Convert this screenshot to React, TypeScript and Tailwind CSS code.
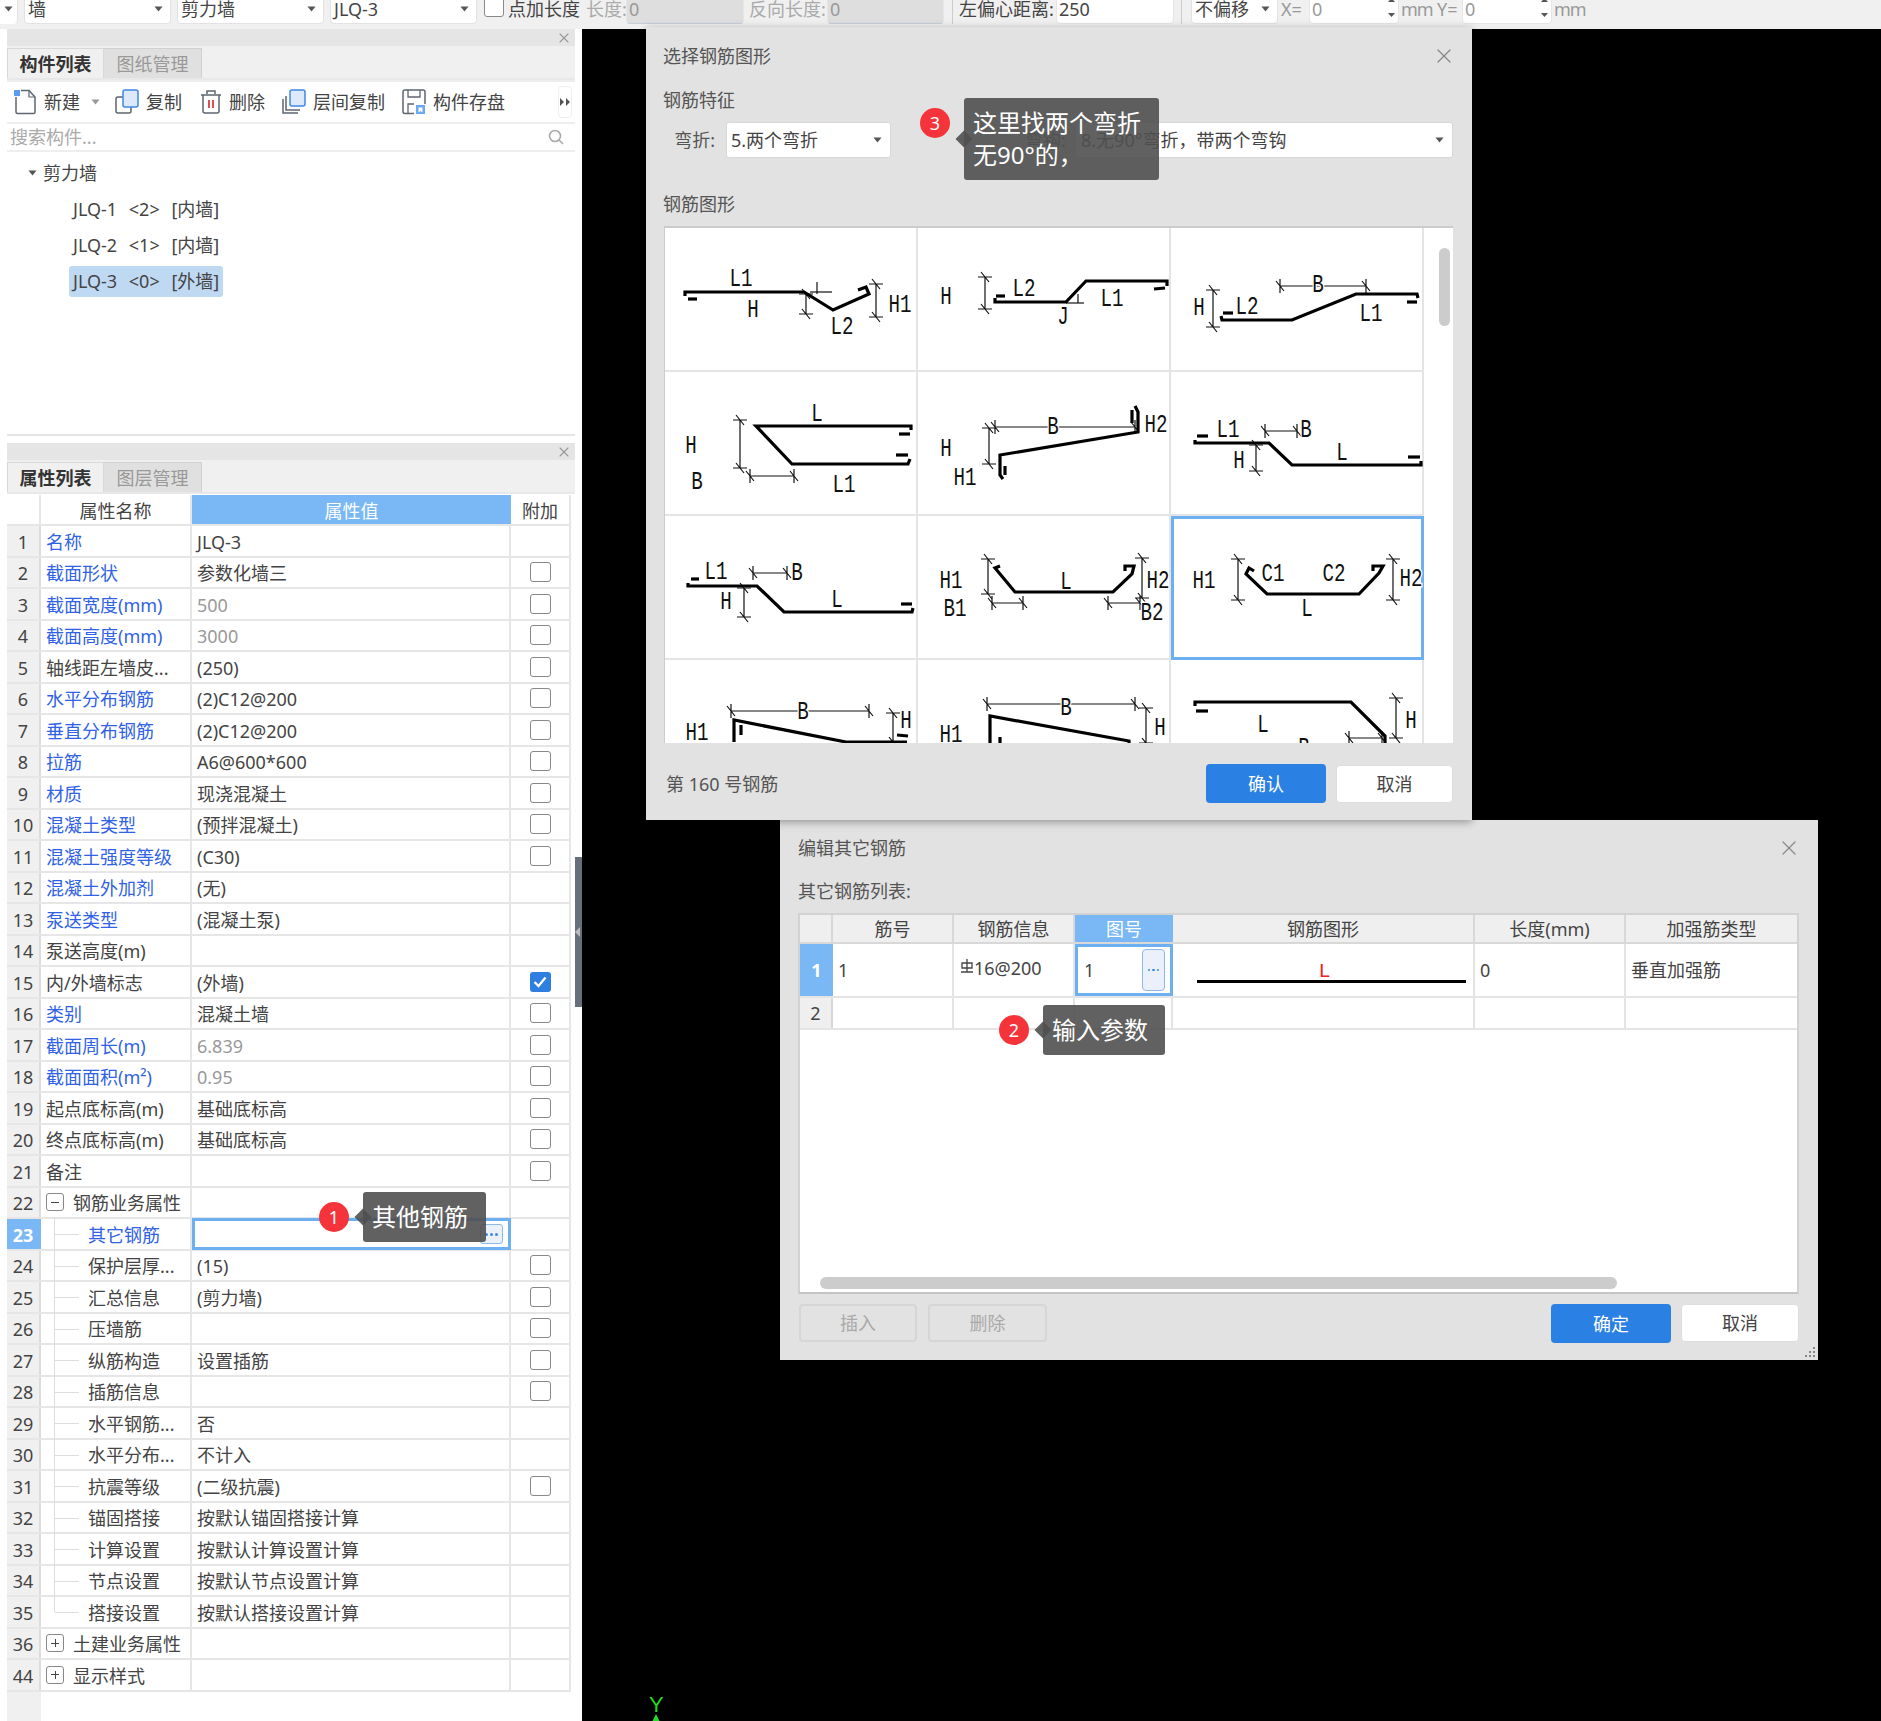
import { X } from "lucide-react";
import type { ReactNode } from "react";

type Row = {
  no: number;
  name: string;
  value?: string;
  blue?: boolean;
  muted?: boolean;
  check?: boolean;
  checked?: boolean;
  sub?: boolean;
  toggle?: "-" | "+";
  active?: boolean;
};

const ROWS: Row[] = [
  { no: 1, name: "名称", value: "JLQ-3", blue: true },
  { no: 2, name: "截面形状", value: "参数化墙三", blue: true, check: true },
  { no: 3, name: "截面宽度(mm)", value: "500", blue: true, muted: true, check: true },
  { no: 4, name: "截面高度(mm)", value: "3000", blue: true, muted: true, check: true },
  { no: 5, name: "轴线距左墙皮...", value: "(250)", check: true },
  { no: 6, name: "水平分布钢筋", value: "(2)C12@200", blue: true, check: true },
  { no: 7, name: "垂直分布钢筋", value: "(2)C12@200", blue: true, check: true },
  { no: 8, name: "拉筋", value: "A6@600*600", blue: true, check: true },
  { no: 9, name: "材质", value: "现浇混凝土", blue: true, check: true },
  { no: 10, name: "混凝土类型", value: "(预拌混凝土)", blue: true, check: true },
  { no: 11, name: "混凝土强度等级", value: "(C30)", blue: true, check: true },
  { no: 12, name: "混凝土外加剂", value: "(无)", blue: true },
  { no: 13, name: "泵送类型", value: "(混凝土泵)", blue: true },
  { no: 14, name: "泵送高度(m)" },
  { no: 15, name: "内/外墙标志", value: "(外墙)", check: true, checked: true },
  { no: 16, name: "类别", value: "混凝土墙", blue: true, check: true },
  { no: 17, name: "截面周长(m)", value: "6.839", blue: true, muted: true, check: true },
  { no: 18, name: "截面面积(m²)", value: "0.95", blue: true, muted: true, check: true },
  { no: 19, name: "起点底标高(m)", value: "基础底标高", check: true },
  { no: 20, name: "终点底标高(m)", value: "基础底标高", check: true },
  { no: 21, name: "备注", check: true },
  { no: 22, name: "钢筋业务属性", toggle: "-" },
  { no: 23, name: "其它钢筋", sub: true, blue: true, active: true },
  { no: 24, name: "保护层厚...", value: "(15)", sub: true, check: true },
  { no: 25, name: "汇总信息", value: "(剪力墙)", sub: true, check: true },
  { no: 26, name: "压墙筋", sub: true, check: true },
  { no: 27, name: "纵筋构造", value: "设置插筋", sub: true, check: true },
  { no: 28, name: "插筋信息", sub: true, check: true },
  { no: 29, name: "水平钢筋...", value: "否", sub: true },
  { no: 30, name: "水平分布...", value: "不计入", sub: true },
  { no: 31, name: "抗震等级", value: "(二级抗震)", sub: true, check: true },
  { no: 32, name: "锚固搭接", value: "按默认锚固搭接计算", sub: true },
  { no: 33, name: "计算设置", value: "按默认计算设置计算", sub: true },
  { no: 34, name: "节点设置", value: "按默认节点设置计算", sub: true },
  { no: 35, name: "搭接设置", value: "按默认搭接设置计算", sub: true },
  { no: 36, name: "土建业务属性", toggle: "+" },
  { no: 44, name: "显示样式", toggle: "+" },
];

type Shape = {
  p: string[];
  d: number[][];
  t: [string, number, number][];
  thin?: number[][];
  sel?: boolean;
};

const SHAPES: Shape[] = [
  {
    p: ["20,68 20,64 139,64 168,82 204,66 201,59 193,62", "23,71 32,71"],
    d: [[141, 66, 141, 86], [211, 56, 211, 89]],
    thin: [[145, 64, 167, 64], [152, 54, 152, 66]],
    t: [["L1", 76, 51], ["H", 88, 82], ["L2", 177, 99], ["H1", 235, 77]],
  },
  {
    p: ["77,70 77,74 148,74 168,53 249,53 249,58", "78,68 87,68", "236,61 247,60"],
    d: [[67, 49, 67, 81]],
    thin: [[148, 75, 166, 75], [160, 66, 160, 75]],
    t: [["H", 28, 69], ["L2", 106, 61], ["L1", 194, 71], ["J", 145, 89]],
  },
  {
    p: ["50,88 51,92 121,92 185,66 246,66 247,70", "52,85 62,85", "236,74 246,74"],
    d: [[109, 58, 195, 58], [42, 62, 42, 99]],
    t: [["B", 147, 57], ["H", 28, 80], ["L2", 76, 79], ["L1", 200, 86]],
  },
  {
    p: ["246,58 246,54 91,54 127,92 243,92 245,87", "234,62 245,62", "231,83 243,83"],
    d: [[75, 48, 75, 96], [85, 104, 129, 104]],
    t: [["L", 152, 42], ["H", 26, 74], ["B", 32, 110], ["L1", 179, 113]],
  },
  {
    p: ["85,107 82,103 82,83 220,60 220,40 217,34", "87,94 87,103", "214,38 214,51"],
    d: [[77, 55, 217, 55], [71, 56, 71, 92]],
    t: [["B", 135, 55], ["H2", 238, 53], ["H", 28, 77], ["H1", 47, 106]],
  },
  {
    p: ["24,68 24,71 98,71 121,93 250,93 250,89", "26,64 37,64", "237,85 249,85"],
    d: [[94, 59, 126, 59], [85, 73, 85, 99]],
    t: [["L1", 57, 58], ["B", 135, 58], ["L", 171, 81], ["H", 68, 89]],
  },
  {
    p: ["23,67 23,70 92,70 119,96 247,96 248,92", "26,63 34,63", "236,88 247,88"],
    d: [[88, 57, 122, 57], [79, 72, 79, 101]],
    t: [["L1", 51, 56], ["B", 132, 57], ["H", 61, 86], ["L", 172, 84]],
  },
  {
    p: ["82,50 77,52 97,76 195,76 214,58 216,50 207,50 207,55"],
    d: [[70, 43, 70, 78], [224, 42, 224, 82], [74, 87, 105, 87], [190, 87, 222, 87]],
    t: [["H1", 33, 65], ["B1", 37, 93], ["L", 148, 66], ["H2", 240, 65], ["B2", 234, 97]],
  },
  {
    p: ["83,55 78,52 75,58 96,78 188,78 208,57 212,50 202,50 202,55"],
    d: [[67, 43, 67, 84], [222, 43, 222, 84]],
    t: [["H1", 33, 65], ["C1", 102, 58], ["C2", 163, 58], ["L", 136, 93], ["H2", 240, 63]],
    sel: true,
  },
  {
    p: ["69,82 69,60 181,82 242,82", "76,65 76,75", "232,75 243,76"],
    d: [[66, 51, 204, 51], [228, 53, 228, 82]],
    t: [["H1", 32, 73], ["B", 138, 52], ["H", 241, 61]],
  },
  {
    p: ["72,90 72,56 211,81 211,90", "82,77 82,90"],
    d: [[69, 44, 217, 44], [228, 48, 228, 83]],
    t: [["H1", 33, 75], ["B", 148, 48], ["H", 242, 68]],
  },
  {
    p: ["24,46 24,42 180,42 214,76 214,90", "25,51 37,51"],
    d: [[225, 38, 225, 78], [178, 78, 211, 78]],
    t: [["L", 92, 65], ["H", 240, 61], ["B", 133, 88]],
  },
];

const Caret = ({ className = "" }: { className?: string }) => (
  <svg width="9" height="6" viewBox="0 0 9 6" className={className}>
    <path d="M0.5 0.5h8L4.5 5.5z" fill="#555" />
  </svg>
);

const Spin = () => (
  <svg width="7" height="24" viewBox="0 0 7 24" className="absolute right-[3px] top-[3px]">
    <path d="M3.5 0L7 4H0z M0 15h7L3.5 19z" fill="#555" />
  </svg>
);

const TopSelect = ({ className, text }: { className: string; text?: string }) => (
  <div
    className={`h-[30px] shrink-0 flex items-center justify-between bg-white border border-[#e2e2e2] rounded-[4px] pl-[3px] pr-[7px] ${className}`}
  >
    <span>{text}</span>
    <Caret />
  </div>
);

const TopInput = ({ className, text, spin }: { className: string; text: string; spin?: boolean }) => (
  <div
    className={`relative h-[30px] shrink-0 flex items-center border border-[#e6e6e6] rounded-[4px] pl-[2px] ${className}`}
  >
    {text}
    {spin && <Spin />}
  </div>
);

const TopBar = () => (
  <div className="h-[29px] shrink-0 flex items-end overflow-hidden bg-[#f0f0f0] pb-[5px] text-[#444] leading-[30px]">
    <div className="w-[18px] h-[30px] shrink-0 flex items-center justify-center bg-white border-r border-[#e2e2e2] rounded-r-[4px]">
      <Caret />
    </div>
    <TopSelect className="w-[147px] ml-[6px]" text="墙" />
    <TopSelect className="w-[147px] ml-[6px]" text="剪力墙" />
    <TopSelect className="w-[147px] ml-[6px]" text="JLQ-3" />
    <div className="w-[20px] h-[20px] shrink-0 ml-[7px] mb-[7px] bg-white border border-[#888] rounded-[3px]" />
    <span className="ml-[4px] h-[30px] w-[78px] shrink-0">点加长度</span>
    <span className="h-[30px] w-[40px] shrink-0 text-[#aaa] whitespace-nowrap">长度:</span>
    <TopInput className="w-[118px] bg-[#dedede] text-[#999] border-b-[#c5cfdc]" text="0" />
    <span className="h-[30px] ml-[5px] w-[78px] shrink-0 text-[#aaa] whitespace-nowrap">反向长度:</span>
    <TopInput className="w-[117px] bg-[#dedede] text-[#999] border-b-[#c5cfdc]" text="0" />
    <div className="w-px h-[24px] ml-[8px] shrink-0 bg-[#ccc]" />
    <span className="h-[30px] ml-[6px] w-[97px] shrink-0 whitespace-nowrap">左偏心距离:</span>
    <TopInput className="w-[118px] bg-white" text="250" />
    <div className="w-px h-[24px] ml-[7px] shrink-0 bg-[#ccc]" />
    <TopSelect className="w-[87px] ml-[9px]" text="不偏移" />
    <span className="h-[30px] ml-[3px] w-[28px] shrink-0 text-[#999]">X=</span>
    <TopInput className="w-[90px] bg-white text-[#999]" text="0" spin />
    <span className="h-[30px] ml-[2px] w-[36px] shrink-0 text-[#999] tracking-[-1px]">mm</span>
    <span className="h-[30px] w-[25px] shrink-0 text-[#999]">Y=</span>
    <TopInput className="w-[90px] bg-white text-[#999]" text="0" spin />
    <span className="h-[30px] ml-[2px] text-[#999] tracking-[-1px]">mm</span>
  </div>
);

const PanelHead = () => (
  <div className="h-[17px] shrink-0 flex items-center justify-end pr-[3px] bg-[#e5e5e5]">
    <X size={16} strokeWidth={1.600} className="text-[#999]" />
  </div>
);

const Tabs = ({ first, second }: { first: string; second: string }) => (
  <div className="h-[34px] shrink-0 flex pt-[2px] bg-[#f0f0f0] border-b-2 border-[#e8e8e8]">
    <div className="w-[97px] flex items-center justify-center bg-[#f0f0f0] border-l border-t border-r border-[#d8d8d8] font-bold text-[#333]">
      {first}
    </div>
    <div className="w-[98px] flex items-center justify-center bg-[#e0e0e0] border-t border-r border-[#d0d0d0] text-[#999]">
      {second}
    </div>
  </div>
);

const DocIcon = () => (
  <svg width="24" height="26" viewBox="0 0 24 26" fill="none">
    <path d="M3 8v15a1.5 1.5 0 0 0 1.500 1.500h16a1.500 1.500 0 0 0 1.500-1.500V8l-6-6.500H8" stroke="#5d6670" strokeWidth="1.500" />
    <path d="M16 1.500V8h6" stroke="#5d6670" strokeWidth="1.200" />
    <rect x="1" y="1" width="6" height="6" fill="#5b9cf0" />
  </svg>
);

const CopyIcon = () => (
  <svg width="24" height="26" viewBox="0 0 24 26" fill="none">
    <rect x="1" y="8" width="15" height="16" rx="2" stroke="#5d6670" strokeWidth="1.500" />
    <rect x="8" y="1" width="15" height="17" rx="2" fill="#dce9fb" stroke="#3f86e6" strokeWidth="1.500" />
  </svg>
);

const TrashIcon = () => (
  <svg width="22" height="26" viewBox="0 0 22 26" fill="none">
    <path d="M3 6v16a2 2 0 0 0 2 2h12a2 2 0 0 0 2-2V6M1 6h20M7 5V2h8v3" stroke="#5d6670" strokeWidth="1.500" />
    <path d="M9 11v8M13 11v8" stroke="#e23b3b" strokeWidth="1.800" />
  </svg>
);

const LayerCopyIcon = () => (
  <svg width="24" height="26" viewBox="0 0 24 26" fill="none">
    <path d="M1 10v14h15" stroke="#5d6670" strokeWidth="1.500" />
    <path d="M4 7v14h14" stroke="#5d6670" strokeWidth="1.500" />
    <rect x="8" y="1" width="15" height="16" rx="2" fill="#dce9fb" stroke="#3f86e6" strokeWidth="1.500" />
  </svg>
);

const SaveIcon = () => (
  <svg width="24" height="26" viewBox="0 0 24 26" fill="none">
    <path d="M12 24.500H3a2 2 0 0 1-2-2V3a2 2 0 0 1 2-2h18a2 2 0 0 1 2 2v12" stroke="#5d6670" strokeWidth="1.500" />
    <path d="M6 1v7h12V1M6 24V15h6" stroke="#5d6670" strokeWidth="1.300" />
    <path d="M14 16h9v9h-9z" fill="#6aa9f2" />
    <path d="M16.500 18.500h4v5l-2-1.500-2 1.500z" fill="#fff" />
  </svg>
);

const ToolItem = ({ icon, label, className }: { icon: ReactNode; label: string; className: string }) => (
  <div className={`flex items-center gap-[7px] ${className}`}>
    {icon}
    <span>{label}</span>
  </div>
);

const Toolbar = () => (
  <div className="relative h-[40px] mt-[2px] shrink-0 flex items-center bg-white text-[#444]">
    <ToolItem className="ml-[6px]" icon={<DocIcon />} label="新建" />
    <Caret className="ml-[11px] opacity-60" />
    <ToolItem className="ml-[15px]" icon={<CopyIcon />} label="复制" />
    <ToolItem className="ml-[18px]" icon={<TrashIcon />} label="删除" />
    <ToolItem className="ml-[17px]" icon={<LayerCopyIcon />} label="层间复制" />
    <ToolItem className="ml-[17px]" icon={<SaveIcon />} label="构件存盘" />
    <div className="ml-auto mr-[3px] w-[14px] h-[32px] flex items-center justify-center rounded-[4px] border border-[#eee]">
      <svg width="10" height="8" viewBox="0 0 10 8">
        <path d="M0 0l4 4-4 4zM6 0l4 4-4 4z" fill="#555" />
      </svg>
    </div>
  </div>
);

const SearchBox = () => (
  <div className="h-[26px] mt-[2px] shrink-0 flex items-center justify-between bg-white pl-[3px] pr-[11px] text-[#aaa]">
    <span>搜索构件...</span>
    <svg width="16" height="16" viewBox="0 0 16 16" fill="none" stroke="#aaa" strokeWidth="1.600">
      <circle cx="7" cy="7" r="5.500" />
      <path d="M11 11l4 4" />
    </svg>
  </div>
);

const TreeItem = ({ text, selected }: { text: string; selected?: boolean }) => (
  <div className="h-[36px] flex items-center pl-[62px]">
    <span
      className={`h-[31px] flex items-center px-[4px] rounded-[3px] whitespace-pre [word-spacing:7px] ${selected ? "bg-[#bfd9f3]" : ""}`}
    >
      {text}
    </span>
  </div>
);

const ComponentPanel = () => (
  <section className="h-[407px] shrink-0 flex flex-col bg-[#eee] border-b-2 border-[#e4e4e4]">
    <PanelHead />
    <Tabs first="构件列表" second="图纸管理" />
    <Toolbar />
    <SearchBox />
    <div className="mt-[2px] flex-1 bg-white pt-[3px] text-[#444]">
      <div className="h-[36px] flex items-center pl-[21px] gap-[6px]">
        <Caret />
        <span>剪力墙</span>
      </div>
      <TreeItem text="JLQ-1 <2> [内墙]" />
      <TreeItem text="JLQ-2 <1> [内墙]" />
      <TreeItem text="JLQ-3 <0> [外墙]" selected />
    </div>
  </section>
);

const Toggle = ({ sign }: { sign: "-" | "+" }) => (
  <div className="relative w-[18px] h-[18px] shrink-0 rounded-[3px] border border-[#888] bg-white">
    <div className="absolute left-[4px] top-[7.500px] w-[8px] h-px bg-[#444]" />
    {sign === "+" && <div className="absolute left-[7.500px] top-[4px] w-px h-[8px] bg-[#444]" />}
  </div>
);

const CheckCell = ({ checked }: { checked?: boolean }) =>
  checked ? (
    <div className="w-[21px] h-[20px] flex items-center justify-center rounded-[3px] bg-[#2f7fe0]">
      <svg width="14" height="12" viewBox="0 0 14 12" fill="none" stroke="#fff" strokeWidth="2.200">
        <path d="M1.500 6l4 4 7-8.500" />
      </svg>
    </div>
  ) : (
    <div className="w-[21px] h-[20px] rounded-[3px] border border-[#888] bg-white" />
  );

const PropRow = ({ row }: { row: Row }) => (
  <div className="h-[31.5px] flex border-b-2 border-[#e6e6e6] box-border">
    <div
      className={`w-[34px] shrink-0 flex items-center justify-center pt-[2px] border-r-2 ${
        row.active ? "bg-[#79b7f5] text-white font-bold border-[#79b7f5]" : "bg-[#f0f0f0] text-[#444] border-[#dcdcdc]"
      }`}
    >
      {row.no}
    </div>
    <div className="relative w-[151px] shrink-0 flex items-center pl-[5px] border-r-2 border-[#e6e6e6]">
      {row.sub && (
        <>
          <div
            className={`absolute left-[13px] top-[-2px] w-px bg-[#ddd] ${row.no === 35 ? "h-[17px]" : "h-[33px]"}`}
          />
          <div className="absolute left-[14px] top-[15px] w-[24px] h-px bg-[#ddd]" />
        </>
      )}
      {row.toggle && <Toggle sign={row.toggle} />}
      <span
        className={`whitespace-nowrap pt-[2px] ${row.sub ? "pl-[42px]" : ""} ${row.toggle ? "pl-[9px]" : ""} ${
          row.blue ? "text-[#2f62e6]" : "text-[#444]"
        }`}
      >
        {row.name}
      </span>
    </div>
    <div
      className={`relative w-[319px] shrink-0 flex items-center pl-[5px] pt-[2px] ${row.muted ? "text-[#999]" : "text-[#444]"} ${
        row.active ? "border-[3px] border-[#6cb0f2] -mt-[1px] h-[32px]" : "border-r-2 border-[#e6e6e6]"
      }`}
    >
      {row.value}
      {row.active && (
        <div className="absolute right-[5px] top-[3px] w-[23px] h-[20px] flex items-center justify-center gap-[2px] rounded-[3px] border border-[#8db8ee] bg-[#eaf1fb]">
          <div className="w-[3px] h-[3px] rounded-full bg-[#3f86e6]" />
          <div className="w-[3px] h-[3px] rounded-full bg-[#3f86e6]" />
          <div className="w-[3px] h-[3px] rounded-full bg-[#3f86e6]" />
        </div>
      )}
    </div>
    <div className="w-[60px] shrink-0 flex items-center justify-center border-r-2 border-[#e6e6e6]">
      {row.check && <CheckCell checked={row.checked} />}
    </div>
  </div>
);

const PropertyPanel = () => (
  <section className="mt-[7px] flex-1 flex flex-col bg-white">
    <PanelHead />
    <Tabs first="属性列表" second="图层管理" />
    <div className="w-[564px] h-[31px] shrink-0 flex mt-px border-b-2 border-[#e6e6e6] text-[#444]">
      <div className="w-[34px] shrink-0 border-r-2 border-[#e6e6e6]" />
      <div className="w-[151px] shrink-0 flex items-center justify-center pt-[2px] border-r-2 border-[#e6e6e6]">属性名称</div>
      <div className="w-[319px] shrink-0 flex items-center justify-center pt-[2px] bg-[#79b7f5] text-white">属性值</div>
      <div className="w-[60px] shrink-0 flex items-center justify-center pt-[2px] border-r-2 border-[#e6e6e6]">附加</div>
    </div>
    <div className="w-[564px] shrink-0">
      {ROWS.map((row) => (
        <PropRow key={row.no} row={row} />
      ))}
    </div>
    <div className="flex-1">
      <div className="w-[34px] h-full bg-[#f0f0f0]" />
    </div>
  </section>
);

const Label = ({ t, x, y }: { t: string; x: number; y: number }) => (
  <text
    x={x}
    y={y}
    textAnchor="middle"
    dominantBaseline="central"
    fontFamily="'Liberation Mono', monospace"
    fontSize="25"
    textLength={t.length * 11.5}
    lengthAdjust="spacingAndGlyphs"
    fill="#111"
    stroke="#fff"
    strokeWidth="3"
    paintOrder="stroke"
  >
    {t}
  </text>
);

const Dim = ({ v }: { v: number[] }) => {
  const [x1, y1, x2, y2] = v;
  const horizontal = y1 === y2;
  const tick = (x: number, y: number) =>
    horizontal
      ? `M${x} ${y - 7}V${y + 7}M${x - 4} ${y - 5}L${x + 4} ${y + 5}`
      : `M${x - 7} ${y}H${x + 7}M${x - 4} ${y - 5}L${x + 4} ${y + 5}`;
  return (
    <path
      d={`M${x1} ${y1}L${x2} ${y2}${tick(x1, y1)}${tick(x2, y2)}`}
      stroke="#111"
      strokeWidth="1.200"
      fill="none"
    />
  );
};

const ShapeCell = ({ shape }: { shape: Shape }) => (
  <div
    className={`h-[144px] ${
      shape.sel ? "shadow-[inset_0_0_0_3px_#6cb0f2]" : "shadow-[inset_-2px_-2px_0_#e4e4e4]"
    }`}
  >
    <svg width="253" height="144" viewBox="0 0 253 144" className="block">
      {shape.d.map((v, i) => (
        <Dim key={i} v={v} />
      ))}
      {shape.thin?.map((v, i) => (
        <line key={i} x1={v[0]} y1={v[1]} x2={v[2]} y2={v[3]} stroke="#111" strokeWidth="1.200" />
      ))}
      {shape.t.map(([t, x, y]) => (
        <Label key={t} t={t} x={x} y={y} />
      ))}
      {shape.p.map((pts, i) => (
        <polyline key={i} points={pts} fill="none" stroke="#000" strokeWidth="3.200" />
      ))}
    </svg>
  </div>
);

const Callout = ({ className, num, numClass, children }: { className: string; num: string; numClass: string; children: ReactNode }) => (
  <div className={`absolute z-20 ${className}`}>
    <div className="relative w-full h-full rounded-[3px] bg-[#505050]/90 text-white text-[24px] leading-[32px] flex items-center px-[9px]">
      <div className="absolute -left-[6px] top-1/2 -mt-[6px] w-[12px] h-[12px] rotate-45 bg-[#505050]/90" />
      <div className="relative">{children}</div>
      <div
        className={`absolute w-[30px] h-[30px] rounded-full bg-[#f5333a] text-[18px] leading-[30px] text-center ${numClass}`}
      >
        {num}
      </div>
    </div>
  </div>
);

const DialogButton = ({ text, kind, className }: { text: string; kind: "primary" | "plain" | "off"; className: string }) => {
  const look =
    kind === "primary"
      ? "bg-[#2b80e3] text-white"
      : kind === "plain"
        ? "bg-white text-[#444] border border-[#ddd]"
        : "bg-[#e2e2e2] text-[#aaa] border-2 border-[#d6d6d6]";
  return (
    <div className={`h-[38px] flex items-center justify-center rounded-[4px] ${look} ${className}`}>{text}</div>
  );
};

const ShapeDialog = () => (
  <div className="absolute z-10 left-[646px] top-[27px] w-[826px] h-[793px] flex flex-col bg-[#e2e2e2] text-[#555] shadow-[0_2px_8px_rgba(0,0,0,0.35)]">
    <div className="h-[58px] shrink-0 flex items-center justify-between pl-[17px] pr-[16px]">
      <span>选择钢筋图形</span>
      <X size={24} strokeWidth={1.200} className="text-[#888]" />
    </div>
    <div className="h-[29px] shrink-0 flex items-center pl-[17px]">钢筋特征</div>
    <div className="mt-[8px] h-[36px] shrink-0 flex items-center">
      <span className="w-[80px] shrink-0 text-right pr-[11px]">弯折:</span>
      <div className="w-[165px] h-[36px] flex items-center justify-between bg-white rounded-[3px] border border-[#d8d8d8] pl-[4px] pr-[8px] text-[#444]">
        5.两个弯折
        <Caret />
      </div>
      <span className="ml-[134px] w-[50px] shrink-0">弯钩:</span>
      <div className="w-[378px] h-[36px] flex items-center justify-between bg-white rounded-[3px] border border-[#d8d8d8] pl-[5px] pr-[8px] text-[#444]">
        8.无90°弯折，带两个弯钩
        <Caret />
      </div>
    </div>
    <div className="mt-[31px] h-[30px] shrink-0 flex items-center pl-[17px]">钢筋图形</div>
    <div className="mt-[7px] ml-[18px] w-[789px] h-[517px] shrink-0 flex overflow-hidden bg-white border-t-2 border-l border-[#ccc]">
      <div className="w-[759px] shrink-0 grid grid-cols-3 auto-rows-[144px] content-start">
        {SHAPES.map((shape, i) => (
          <ShapeCell key={i} shape={shape} />
        ))}
      </div>
      <div className="flex-1 pl-[15px] pt-[20px]">
        <div className="w-[11px] h-[78px] rounded-[6px] bg-[#ccc]" />
      </div>
    </div>
    <div className="flex-1 flex items-start pt-[21px] pl-[20px] pr-[19px]">
      <span className="mt-[11px]">第 160 号钢筋</span>
      <DialogButton kind="primary" text="确认" className="ml-auto w-[120px] h-[39px]" />
      <DialogButton kind="plain" text="取消" className="ml-[10px] w-[117px] mt-px" />
    </div>
  </div>
);

const RebarGlyph = () => (
  <svg width="14" height="16" viewBox="0 0 14 16" fill="none" stroke="#444" strokeWidth="1.300" className="-mt-[8px]">
    <path d="M7 1v13M2 5v5h10V5zM1 14h12" />
  </svg>
);

const EditDialog = () => (
  <div className="absolute left-[780px] top-[820px] w-[1038px] h-[540px] flex flex-col bg-[#e2e2e2] text-[#555]">
    <div className="h-[56px] shrink-0 flex items-center justify-between pl-[18px] pr-[17px]">
      <span>编辑其它钢筋</span>
      <X size={24} strokeWidth={1.200} className="text-[#888]" />
    </div>
    <div className="h-[30px] shrink-0 flex items-center pl-[18px]">其它钢筋列表:</div>
    <div className="relative mt-[7px] ml-[18px] w-[1001px] h-[381px] shrink-0 bg-white border-2 border-[#d2d2d2] border-b-[#c4c4c4]">
      <div className="h-[29px] flex bg-[#efefef] border-b-2 border-[#d8d8d8] text-[#444]">
        <div className="w-[33px] shrink-0 border-r-2 border-[#d8d8d8]" />
        <div className="w-[121px] shrink-0 flex items-center justify-center border-r-2 border-[#d8d8d8]">筋号</div>
        <div className="w-[121px] shrink-0 flex items-center justify-center border-r-2 border-[#d8d8d8]">钢筋信息</div>
        <div className="w-[98px] shrink-0 flex items-center justify-center bg-[#79b7f5] text-white">图号</div>
        <div className="w-[302px] shrink-0 flex items-center justify-center border-r-2 border-[#d8d8d8]">钢筋图形</div>
        <div className="w-[151px] shrink-0 flex items-center justify-center border-r-2 border-[#d8d8d8]">长度(mm)</div>
        <div className="flex-1 flex items-center justify-center">加强筋类型</div>
      </div>
      <div className="h-[54px] flex border-b-2 border-[#e4e4e4] text-[#444]">
        <div className="w-[33px] shrink-0 flex items-center justify-center bg-[#79b7f5] text-white font-bold">1</div>
        <div className="w-[121px] shrink-0 flex items-center pl-[5px] border-r-2 border-[#e4e4e4]">1</div>
        <div className="w-[121px] shrink-0 flex items-center pl-[6px] border-r-2 border-[#e4e4e4]">
          <RebarGlyph />
          <span className="-mt-[4px]">16@200</span>
        </div>
        <div className="w-[98px] shrink-0 flex items-center justify-between pl-[6px] pr-[5px] border-[3px] border-[#6cb0f2]">
          1
          <div className="w-[23px] h-[42px] flex items-center justify-center gap-[2px] rounded-[4px] border border-[#8db8ee] bg-[#eaf1fb]">
            <div className="w-[2.500px] h-[2.500px] rounded-full bg-[#3f86e6]" />
            <div className="w-[2.500px] h-[2.500px] rounded-full bg-[#3f86e6]" />
            <div className="w-[2.500px] h-[2.500px] rounded-full bg-[#3f86e6]" />
          </div>
        </div>
        <div className="w-[302px] shrink-0 flex flex-col items-center justify-end pb-[13px] pl-[16px] border-r-2 border-[#e4e4e4]">
          <span className="mr-[13px] font-['Liberation_Mono',monospace] text-[20px] text-[#e22] leading-[17px]">L</span>
          <div className="w-[269px] h-[3px] bg-black" />
        </div>
        <div className="w-[151px] shrink-0 flex items-center pl-[5px] border-r-2 border-[#e4e4e4]">0</div>
        <div className="flex-1 flex items-center pl-[5px]">垂直加强筋</div>
      </div>
      <div className="h-[32px] flex border-b-2 border-[#e4e4e4] text-[#444]">
        <div className="w-[33px] shrink-0 flex items-center justify-center bg-[#efefef] border-r-2 border-[#d8d8d8]">2</div>
        <div className="w-[121px] shrink-0 border-r-2 border-[#e4e4e4]" />
        <div className="w-[121px] shrink-0 border-r-2 border-[#e4e4e4]" />
        <div className="w-[98px] shrink-0 border-r-2 border-[#e4e4e4]" />
        <div className="w-[302px] shrink-0 border-r-2 border-[#e4e4e4]" />
        <div className="w-[151px] shrink-0 border-r-2 border-[#e4e4e4]" />
      </div>
      <div className="absolute left-[20px] bottom-[3px] w-[797px] h-[12px] rounded-[6px] bg-[#ccc]" />
    </div>
    <div className="mt-[10px] ml-[19px] w-[1000px] flex items-start">
      <DialogButton kind="off" text="插入" className="w-[118px]" />
      <DialogButton kind="off" text="删除" className="ml-[11px] w-[119px]" />
      <DialogButton kind="primary" text="确定" className="ml-auto w-[120px] h-[39px]" />
      <DialogButton kind="plain" text="取消" className="ml-[10px] w-[118px]" />
    </div>
    <svg width="12" height="12" viewBox="0 0 12 12" className="absolute right-[2px] bottom-[2px]">
      <path d="M9 1h2v2H9zM9 5h2v2H9zM5 5h2v2H5zM9 9h2v2H9zM5 9h2v2H5zM1 9h2v2H1z" fill="#888" />
    </svg>
  </div>
);

export default function App() {
  return (
    <div className="relative w-[1881px] h-[1721px] flex flex-col overflow-hidden bg-black text-[18px] leading-none font-['Noto_Sans','Noto_Sans_CJK_SC',sans-serif]">
      <TopBar />
      <div className="flex-1 flex min-h-0">
        <aside className="w-[582px] shrink-0 flex flex-col pl-[7px] pr-[7px] bg-white">
          <ComponentPanel />
          <PropertyPanel />
        </aside>
      </div>

      <div className="absolute left-[575px] top-[857px] w-[7px] h-[150px] flex items-center bg-[#66707a]">
        <div className="w-0 h-0 border-y-[5px] border-y-transparent border-r-[5px] border-r-[#bbb]" />
      </div>

      <ShapeDialog />
      <EditDialog />

      <Callout className="left-[964px] top-[98px] w-[195px] h-[82px]" num="3" numClass="-left-[44px] top-[10px]">
        这里找两个弯折
        <br />
        无90°的，
      </Callout>
      <Callout className="left-[1043px] top-[1005px] w-[122px] h-[50px]" num="2" numClass="-left-[44px] top-[10px]">
        输入参数
      </Callout>
      <Callout className="left-[363px] top-[1192px] w-[123px] h-[50px]" num="1" numClass="-left-[44px] top-[10px]">
        其他钢筋
      </Callout>

      <div className="absolute left-[649px] top-[1695px] flex flex-col items-center text-[#22dd22]">
        <span className="text-[22px] leading-[19px] font-['Liberation_Sans',sans-serif]">Y</span>
        <div className="w-0 h-0 border-x-[4px] border-x-transparent border-b-[8px] border-b-[#22dd22]" />
      </div>
    </div>
  );
}
